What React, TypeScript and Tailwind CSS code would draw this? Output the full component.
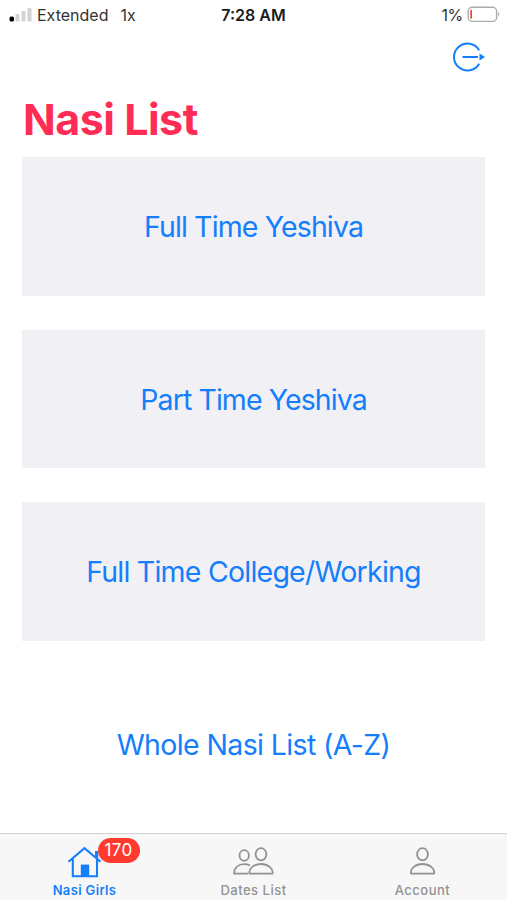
import clsx from 'clsx';

const lists = [
  { label: 'Full Time Yeshiva', filled: true, tracking: 'tracking-[-0.87px]' },
  { label: 'Part Time Yeshiva', filled: true, tracking: 'tracking-[-0.92px]' },
  { label: 'Full Time College/Working', filled: true, tracking: 'tracking-[-0.77px]' },
  { label: 'Whole Nasi List (A-Z)', filled: false, tracking: 'tracking-[-0.63px]' }
];

function SignalIcon() {
  return (
    <svg width="24" height="16" viewBox="0 0 24 16">
      <rect x="0.5" y="9.5" width="4.5" height="5" rx="1.5" fill="#000" />
      <rect x="6.5" y="7" width="4" height="7.5" rx="1" fill="#d2d2d2" />
      <rect x="12.5" y="4" width="4" height="10.5" rx="1" fill="#d2d2d2" />
      <rect x="18.5" y="1" width="4" height="13.5" rx="1" fill="#d2d2d2" />
    </svg>
  );
}

function BatteryIcon() {
  return (
    <svg width="34" height="18" viewBox="0 0 34 18">
      <rect x="1.2" y="1.2" width="28.4" height="14.2" rx="4" fill="none" stroke="#acacac" strokeWidth="1.4" />
      <rect x="3.3" y="3.8" width="1.7" height="9" rx="0.8" fill="#ff3b30" />
      <path d="M31.2 6.1c1.6.5 1.6 3.9 0 4.4z" fill="#acacac" />
    </svg>
  );
}

function LogoutIcon() {
  return (
    <svg width="34" height="30" viewBox="0 0 34 30" fill="none" stroke="#157efb" strokeWidth="2">
      <path d="M28.2 8.3A13.5 13.5 0 1 0 28.2 21.7" />
      <path d="M11.5 15H27" />
      <path d="M28.5 11.5 34 15 28.5 18.5z" fill="#157efb" stroke="none" />
    </svg>
  );
}

function HomeIcon() {
  return (
    <svg width="36" height="32" viewBox="0 0 36 32" fill="none" stroke="#157efb" strokeWidth="2.1">
      <path d="M1.5 15.8 17.5 2.2 33.5 15.8" />
      <path d="M5.8 13V30.2H30V13" />
      <path d="M28 5h3.2v8L28 10.4z" fill="#157efb" stroke="none" />
      <path d="M13.8 18.6h8.4V31h-8.4z" fill="#157efb" stroke="none" />
    </svg>
  );
}

function PeopleIcon() {
  return (
    <svg width="42" height="30" viewBox="0 0 42 30" fill="none" stroke="#929292" strokeWidth="1.8">
      <ellipse cx="11.2" cy="9.5" rx="4.7" ry="5.3" />
      <path d="M15 27.7H1.1C1.1 21.5 5.5 18.2 11.3 18.2c2.2 0 4 .4 5.6 1.2" />
      <ellipse cx="28" cy="8.3" rx="5.4" ry="6.1" />
      <path d="M16.4 27.7c-.8-5.2 4.6-9.7 11.6-9.7s12.400 4.500 11.600 9.700z" strokeLinejoin="round" />
    </svg>
  );
}

function PersonIcon() {
  return (
    <svg width="28" height="30" viewBox="0 0 28 30" fill="none" stroke="#929292" strokeWidth="1.8">
      <ellipse cx="13.5" cy="8.3" rx="5.4" ry="6.1" />
      <path d="M1.9 27.7c-.8-5.2 4.6-9.7 11.6-9.7s12.400 4.500 11.600 9.700z" strokeLinejoin="round" />
    </svg>
  );
}

export default function App() {
  return (
    <div className="flex h-[900px] w-[507px] flex-col overflow-hidden bg-white font-['Inter',sans-serif]">
      <header className="grid h-[30px] grid-cols-3 items-center text-[16px] text-[#333]">
        <div className="flex items-center pl-[9px]">
          <SignalIcon />
          <span className="ml-1 whitespace-nowrap">Extended</span>
          <span className="ml-3">1x</span>
        </div>
        <span className="text-center text-[16px] font-semibold text-[#1c1c1c]">7:28 AM</span>
        <div className="flex items-center justify-end pr-[6px]">
          <span className="mr-1 tracking-[-0.3px]">1%</span>
          <BatteryIcon />
        </div>
      </header>

      <main className="flex flex-1 flex-col px-[22px]">
        <button className="mt-3 self-end">
          <LogoutIcon />
        </button>
        <h1 className="mt-5 h-[65px] pl-px text-[43px] leading-[54px] font-bold tracking-[-0.5px] text-[#ff2d55]">
          Nasi List
        </h1>
        <div className="flex flex-col gap-[34px]">
          {lists.map(({ label, filled, tracking }) => (
            <button
              key={label}
              className={clsx(
                'h-[138.5px] w-full pt-[3px] text-[28.5px] whitespace-nowrap text-[#147efb]',
                filled && 'bg-[#f1f0f5]',
                tracking
              )}
            >
              {label}
            </button>
          ))}
        </div>
      </main>

      <nav className="grid h-[67px] grid-cols-3 border-t border-[#d2d2d2] bg-[#f7f7f7] text-[13px] font-medium tracking-[0.5px] text-[#929292]">
        <button className="flex flex-col items-center pt-3 font-semibold tracking-[0.35px] text-[#157efb]">
          <span className="relative h-8">
            <HomeIcon />
            <span className="absolute -top-[8px] left-[31px] flex h-[25px] w-[42px] items-center justify-center rounded-full bg-[#ff3b30] text-[17px] font-normal text-white">
              170
            </span>
          </span>
          <span className="mt-1 leading-4">Nasi Girls</span>
        </button>
        <button className="flex flex-col items-center pt-3">
          <PeopleIcon />
          <span className="mt-1.5 leading-4">Dates List</span>
        </button>
        <button className="flex flex-col items-center pt-3">
          <PersonIcon />
          <span className="mt-1.5 leading-4">Account</span>
        </button>
      </nav>
    </div>
  );
}
